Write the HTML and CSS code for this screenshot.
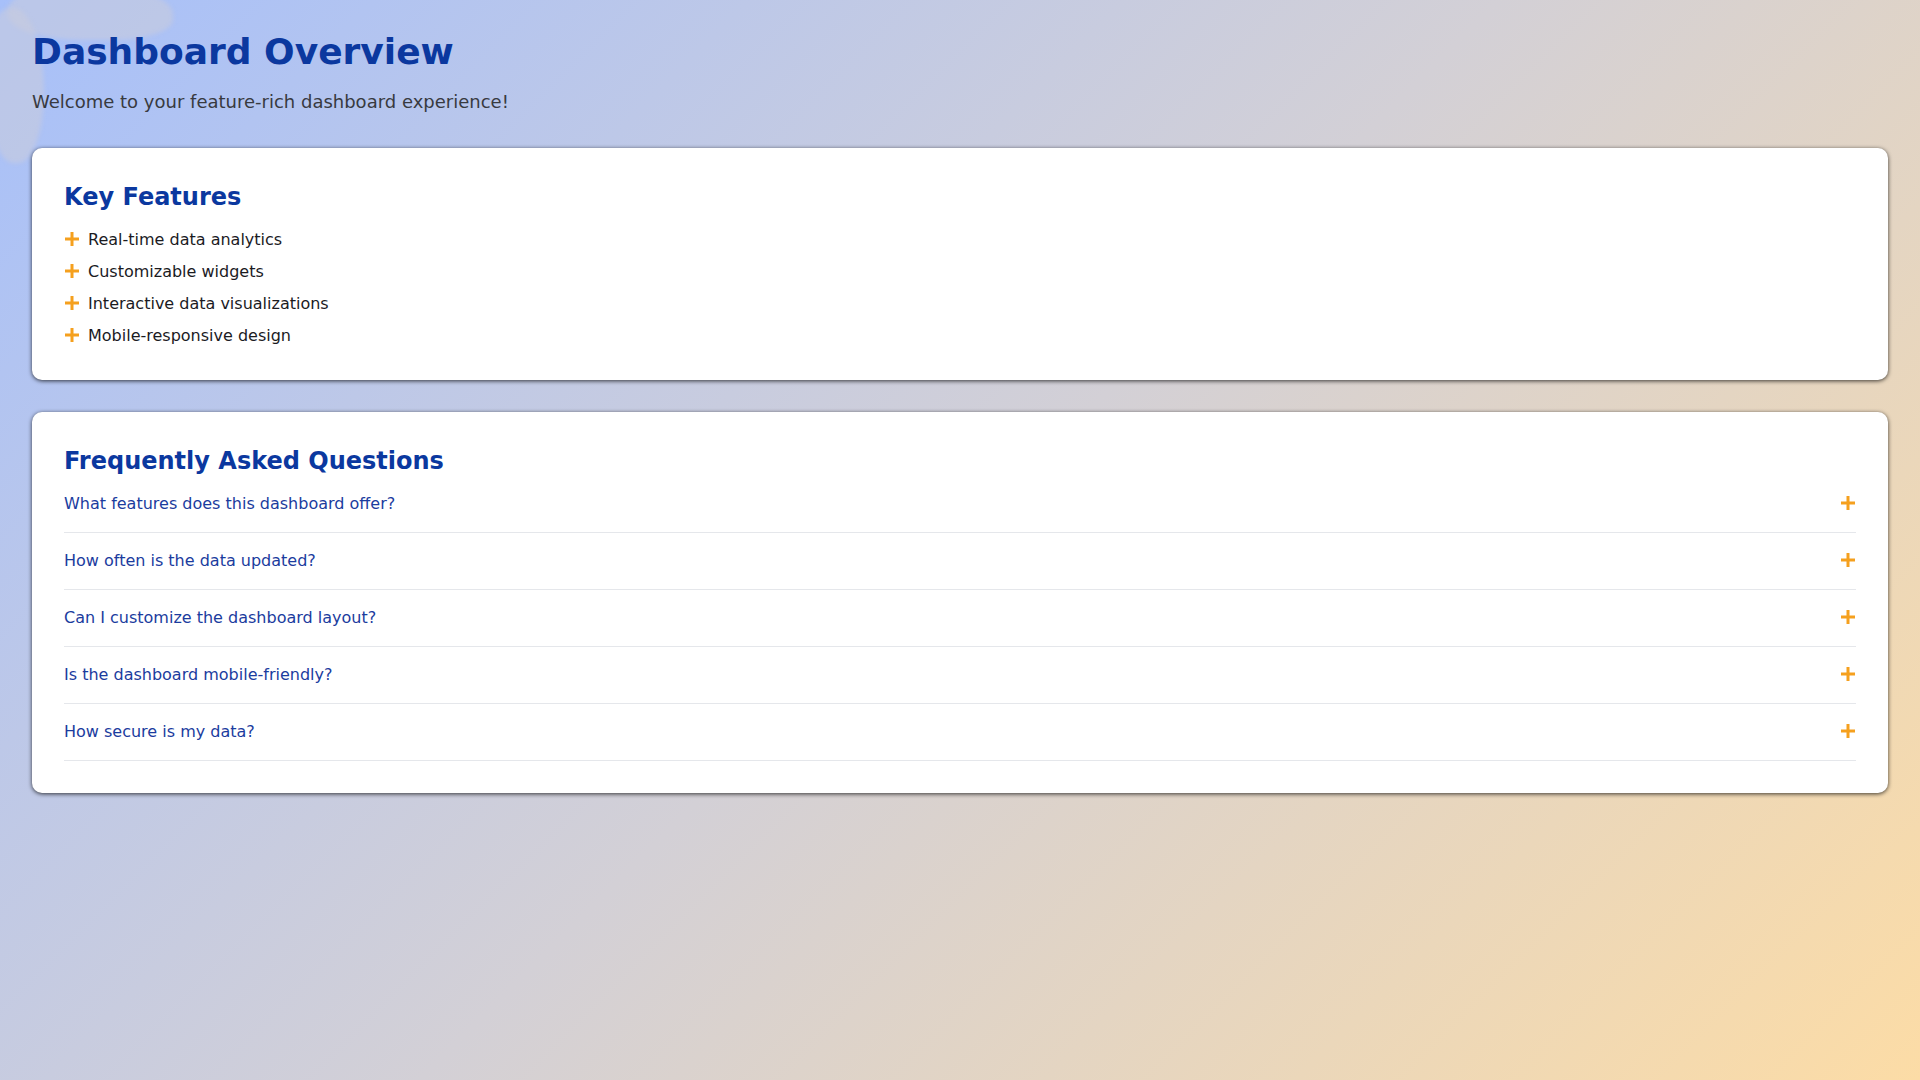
FILE: index.html
```html
<!DOCTYPE html>
<html lang="en">
<head>
<meta charset="utf-8">
<title>Dashboard Overview</title>
<link rel="stylesheet" href="styles.css">
</head>
<body>
<div class="blob blob-a"></div>
<div class="blob blob-b"></div>
<main class="page">
  <header class="page-header">
    <h1 class="title">Dashboard Overview</h1>
    <p class="subtitle">Welcome to your feature-rich dashboard experience!</p>
  </header>

  <section class="card">
    <h2 class="card-title">Key Features</h2>
    <ul class="features">
      <li class="feature"><svg class="plus" viewBox="0 0 14 14"><path d="M7 0v14M0 7h14"/></svg><span>Real-time data analytics</span></li>
      <li class="feature"><svg class="plus" viewBox="0 0 14 14"><path d="M7 0v14M0 7h14"/></svg><span>Customizable widgets</span></li>
      <li class="feature"><svg class="plus" viewBox="0 0 14 14"><path d="M7 0v14M0 7h14"/></svg><span>Interactive data visualizations</span></li>
      <li class="feature"><svg class="plus" viewBox="0 0 14 14"><path d="M7 0v14M0 7h14"/></svg><span>Mobile-responsive design</span></li>
    </ul>
  </section>

  <section class="card">
    <h2 class="card-title faq-title">Frequently Asked Questions</h2>
    <div class="faq-list">
      <div class="faq-item"><span class="question">What features does this dashboard offer?</span><svg class="plus" viewBox="0 0 14 14"><path d="M7 0v14M0 7h14"/></svg></div>
      <div class="faq-item"><span class="question">How often is the data updated?</span><svg class="plus" viewBox="0 0 14 14"><path d="M7 0v14M0 7h14"/></svg></div>
      <div class="faq-item"><span class="question">Can I customize the dashboard layout?</span><svg class="plus" viewBox="0 0 14 14"><path d="M7 0v14M0 7h14"/></svg></div>
      <div class="faq-item"><span class="question">Is the dashboard mobile-friendly?</span><svg class="plus" viewBox="0 0 14 14"><path d="M7 0v14M0 7h14"/></svg></div>
      <div class="faq-item"><span class="question">How secure is my data?</span><svg class="plus" viewBox="0 0 14 14"><path d="M7 0v14M0 7h14"/></svg></div>
    </div>
  </section>
</main>
</body>
</html>
```

FILE: styles.css
```css
html {
  min-height: 100%;
  background: linear-gradient(135deg, #a7c0fa 0%, #d3d0d6 50%, #fcdca6 100%);
}

body {
  margin: 0;
  min-height: 100vh;
  font-family: "DejaVu Sans", Verdana, sans-serif;
  position: relative;
  overflow: hidden;
}

.blob {
  position: absolute;
  background: rgba(200, 203, 222, 0.6);
  filter: blur(2px);
  pointer-events: none;
}

.blob-a {
  left: 8px;
  top: -16px;
  width: 165px;
  height: 56px;
  border-radius: 50% 60% 40% 50%;
}

.blob-b {
  left: -12px;
  top: 8px;
  width: 56px;
  height: 155px;
  border-radius: 40% 60% 50% 50%;
}

.page {
  position: relative;
  padding: 31px 32px 32px;
  display: flex;
  flex-direction: column;
}

.page-header {
  margin-bottom: 36px;
}

.title {
  margin: 0 0 19px;
  font-size: 36px;
  font-weight: bold;
  color: #0b389f;
  line-height: normal;
}

.subtitle {
  margin: 0;
  font-size: 18px;
  color: #383a40;
  line-height: normal;
}

.card {
  background: #ffffff;
  border-radius: 10px;
  padding: 32px;
  margin-bottom: 32px;
  box-shadow: 0 1px 4px rgba(0, 0, 0, 0.75);
}

.card-title {
  margin: 3px 0 17px;
  font-size: 24px;
  font-weight: bold;
  color: #0b389f;
  line-height: normal;
}

.faq-title {
  margin-bottom: 1px;
}

.features {
  list-style: none;
  margin: 0;
  padding: 0;
  display: flex;
  flex-direction: column;
  gap: 8px;
}

.feature {
  display: flex;
  align-items: center;
  gap: 9px;
  font-size: 16px;
  line-height: 24px;
  color: #1b1b1f;
}

.feature .plus {
  margin-left: 1px;
}

.plus {
  width: 14px;
  height: 14px;
  flex: none;
  margin-top: -3px;
  stroke: #f5a01e;
  stroke-width: 3;
  fill: none;
}

.faq-list {
  display: flex;
  flex-direction: column;
}

.faq-item {
  display: flex;
  align-items: center;
  justify-content: space-between;
  padding: 16px 0;
  border-bottom: 1px solid #e5e7eb;
  font-size: 16px;
  line-height: 24px;
}

.faq-item .plus {
  margin-right: 1px;
}

.question {
  color: #1b3c9e;
}
```
